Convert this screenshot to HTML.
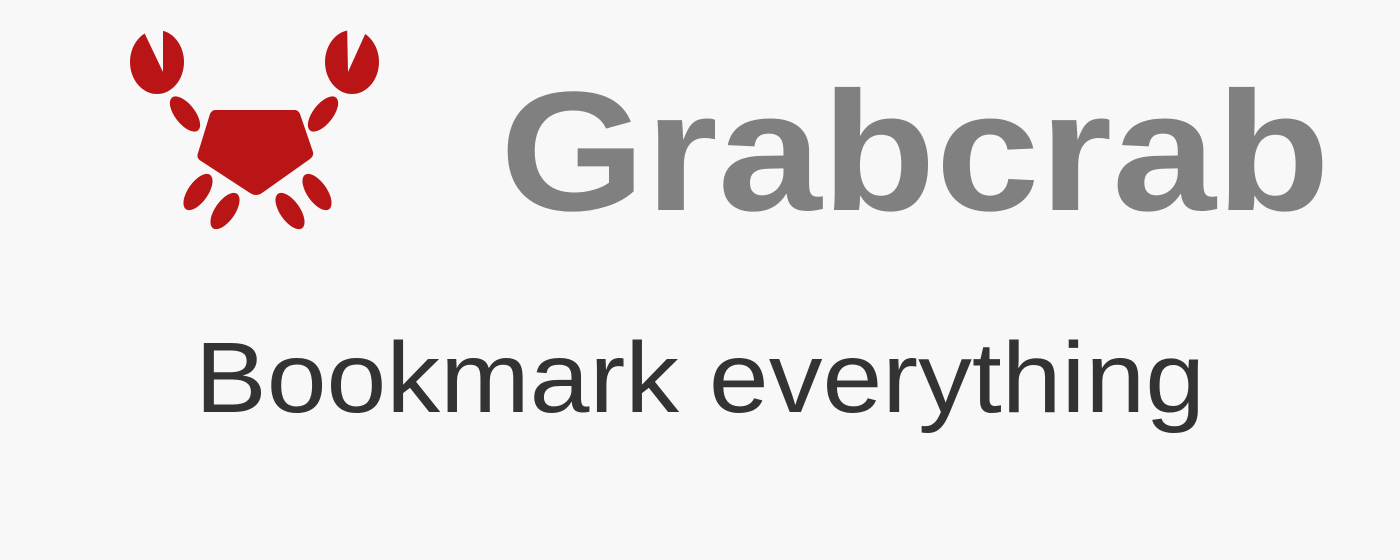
<!DOCTYPE html>
<html><head><style>
html,body{margin:0;padding:0;background:#f8f8f8;width:1400px;height:560px;overflow:hidden}
</style></head><body>
<svg width="1400" height="560" viewBox="0 0 1400 560" xmlns="http://www.w3.org/2000/svg">
<rect width="1400" height="560" fill="#f8f8f8"/>
<g fill="#b91517">
<ellipse cx="157" cy="62" rx="27" ry="32"/>
<ellipse cx="352" cy="62" rx="27" ry="32"/>
<path d="M215,110 L295,110 Q298,110 300,114 L313,152 Q314,156 310,159 L262,193 Q256,197 250,193 L201,161 Q196,158 198,153 L210,114 Q212,110 215,110 Z"/>
<ellipse cx="185" cy="114" rx="10" ry="21" transform="rotate(-38 185 114)"/>
<ellipse cx="323" cy="114" rx="10" ry="21" transform="rotate(38 323 114)"/>
<ellipse cx="198" cy="192" rx="10" ry="21" transform="rotate(35 198 192)"/>
<ellipse cx="225" cy="211" rx="10" ry="21" transform="rotate(35 225 211)"/>
<ellipse cx="290" cy="211" rx="10" ry="21" transform="rotate(-35 290 211)"/>
<ellipse cx="317" cy="192" rx="10" ry="21" transform="rotate(-35 317 192)"/>
</g>
<g fill="#f8f8f8">
<polygon points="140,22 143,30 163,72 163,22"/>
<polygon points="370,22 367,30 348,72 347,22"/>
</g>
<text x="500" y="210" font-family="Liberation Sans, sans-serif" font-weight="bold" font-size="170" fill="#808080" textLength="830" lengthAdjust="spacingAndGlyphs">Grabcrab</text>
<text x="195" y="412" font-family="Liberation Sans, sans-serif" font-size="100" fill="#333333" textLength="1010" lengthAdjust="spacingAndGlyphs">Bookmark everything</text>
</svg>
</body></html>
